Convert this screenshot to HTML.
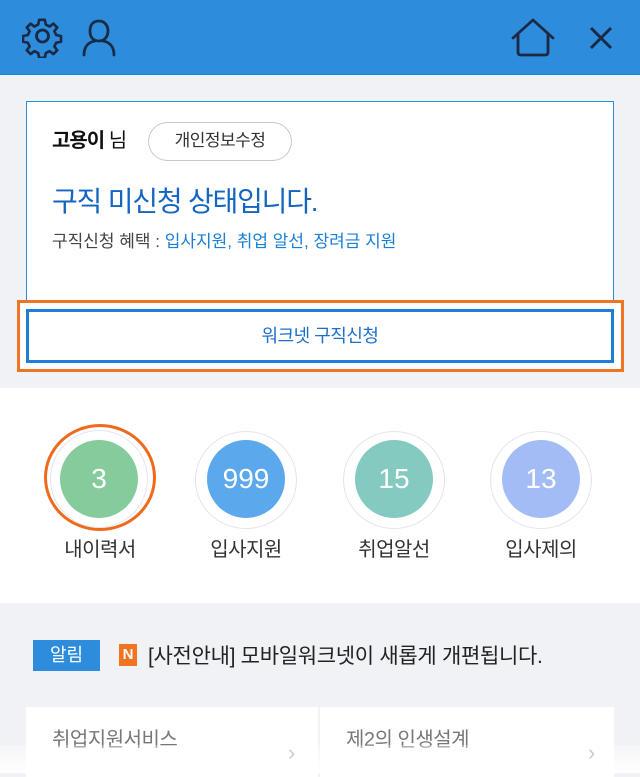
<!DOCTYPE html><html><head><meta charset="utf-8"><style>
*{margin:0;padding:0;box-sizing:border-box}
body{width:640px;height:773px;overflow:hidden;font-family:"Liberation Sans","Noto Sans CJK KR",sans-serif;background:#f0f2f6;position:relative}
.a{position:absolute}
</style></head><body>
<div class="a" style="left:0;top:0;width:640px;height:75px;background:#2d8ddc;border-bottom:1px solid #1e7fd0"></div>
<svg class="a" style="left:22px;top:18px" width="42" height="40" viewBox="0 0 42 40"><g fill="none" stroke="#1a2a44" stroke-width="2.8" stroke-linejoin="round"><path d="M17 3h6l1 5 4 2 4-3 4 4-3 4 2 4 5 1v6l-5 1-2 4 3 4-4 4-4-3-4 2-1 5h-6l-1-5-4-2-4 3-4-4 3-4-2-4-5-1v-6l5-1 2-4-3-4 4-4 4 3 4-2z" transform="translate(1,-1) scale(0.95)"/><circle cx="20.5" cy="18" r="6"/></g></svg>
<svg class="a" style="left:80px;top:18px" width="38" height="40" viewBox="0 0 38 40"><g fill="none" stroke="#1a2a44" stroke-width="2.8" stroke-linecap="round"><path d="M19 3c-6 0-9 4-9 10s3 10 9 10 9-5 9-10-3-10-9-10z"/><path d="M4 37c0-9 5-13 11-14M34 37c0-9-5-13-11-14"/></g></svg>
<svg class="a" style="left:510px;top:18px" width="46" height="40" viewBox="0 0 46 40"><path d="M3 20L23 2l20 18M8 17v17q0 3 3 3h24q3 0 3-3V17" fill="none" stroke="#1a2a44" stroke-width="2.8" stroke-linejoin="round" stroke-linecap="round"/></svg>
<svg class="a" style="left:588px;top:25px" width="26" height="26" viewBox="0 0 26 26"><path d="M3 3l20 20M23 3L3 23" stroke="#1a2a44" stroke-width="3"/></svg>

<div class="a" style="left:26px;top:101px;width:588px;height:212px;background:#fff;border:1.5px solid #2d8ddc"></div>
<div class="a" style="left:52px;top:124px;font-size:20px;color:#111;font-weight:bold;letter-spacing:-1px">고용이 <span style="font-weight:normal">님</span></div>
<div class="a" style="left:148px;top:122px;width:144px;height:39px;border:1.5px solid #c8c8c8;border-radius:20px;font-size:17px;color:#333;text-align:center;line-height:36px;letter-spacing:-0.5px">개인정보수정</div>
<div class="a" style="left:52px;top:180px;font-size:28px;color:#1265c0;letter-spacing:-1.2px">구직 미신청 상태입니다.</div>
<div class="a" style="left:52px;top:227px;font-size:17px;color:#444;letter-spacing:0">구직신청 혜택 : <span style="color:#1a7fd6">입사지원, 취업 알선, 장려금 지원</span></div>
<div class="a" style="left:17px;top:300px;width:607px;height:72px;border:3px solid #f07522;background:#fff"></div>
<div class="a" style="left:26px;top:309px;width:588px;height:54px;border:3px solid #1e7fd6;font-size:18px;color:#1a70cc;text-align:center;line-height:48px;letter-spacing:-0.5px">워크넷 구직신청</div>

<div class="a" style="left:0;top:388px;width:640px;height:215px;background:#fff"></div>
<div class="a" style="left:44px;top:424px;width:112px;height:107px;border:3px solid #f06a1c;border-radius:50%"></div>
<div class="a" style="left:50px;top:430px;width:98px;height:98px;border:1.5px solid #e1e5ee;border-radius:50%"></div>
<div class="a" style="left:60px;top:440px;width:78px;height:78px;background:#86cb9c;border-radius:50%;color:#fff;font-size:28px;text-align:center;line-height:78px">3</div>
<div class="a" style="left:195px;top:431px;width:102px;height:98px;border:1.5px solid #e1e5ee;border-radius:50%"></div>
<div class="a" style="left:207px;top:440px;width:78px;height:78px;background:#5ba8ec;border-radius:50%;color:#fff;font-size:28px;text-align:center;line-height:78px">999</div>
<div class="a" style="left:343px;top:431px;width:102px;height:98px;border:1.5px solid #e1e5ee;border-radius:50%"></div>
<div class="a" style="left:355px;top:440px;width:78px;height:78px;background:#85cac0;border-radius:50%;color:#fff;font-size:28px;text-align:center;line-height:78px">15</div>
<div class="a" style="left:490px;top:431px;width:102px;height:98px;border:1.5px solid #e1e5ee;border-radius:50%"></div>
<div class="a" style="left:502px;top:440px;width:78px;height:78px;background:#a4bcf6;border-radius:50%;color:#fff;font-size:28px;text-align:center;line-height:78px">13</div>
<div class="a" style="left:40px;top:533px;width:120px;text-align:center;font-size:20px;color:#333;letter-spacing:-0.5px">내이력서</div>
<div class="a" style="left:186px;top:533px;width:120px;text-align:center;font-size:20px;color:#333;letter-spacing:-0.5px">입사지원</div>
<div class="a" style="left:334px;top:533px;width:120px;text-align:center;font-size:20px;color:#333;letter-spacing:-0.5px">취업알선</div>
<div class="a" style="left:481px;top:533px;width:120px;text-align:center;font-size:20px;color:#333;letter-spacing:-0.5px">입사제의</div>

<div class="a" style="left:33px;top:640px;width:67px;height:31px;background:#2d8ddc;color:#fff;font-size:18px;text-align:center;line-height:31px">알림</div>
<div class="a" style="left:119px;top:644px;width:18px;height:22px;background:#f07522;color:#fff;font-size:15px;font-weight:bold;text-align:center;line-height:22px">N</div>
<div class="a" style="left:148px;top:640px;font-size:21px;color:#222;letter-spacing:-0.3px">[사전안내] 모바일워크넷이 새롭게 개편됩니다.</div>
<div class="a" style="left:26px;top:707px;width:292px;height:70px;background:#fff"></div>
<div class="a" style="left:320px;top:707px;width:294px;height:70px;background:#fff"></div>
<div class="a" style="left:52px;top:723px;font-size:20px;color:#777;letter-spacing:-0.5px">취업지원서비스</div>
<div class="a" style="left:346px;top:723px;font-size:20px;color:#777;letter-spacing:-0.5px">제2의 인생설계</div>
<div class="a" style="left:0;top:745px;width:640px;height:28px;background:linear-gradient(rgba(255,255,255,0.3),rgba(255,255,255,0.95))"></div>
<div class="a" style="left:288px;top:740px;color:#ccc;font-size:22px">›</div>
<div class="a" style="left:588px;top:740px;color:#ccc;font-size:22px">›</div>
</body></html>
